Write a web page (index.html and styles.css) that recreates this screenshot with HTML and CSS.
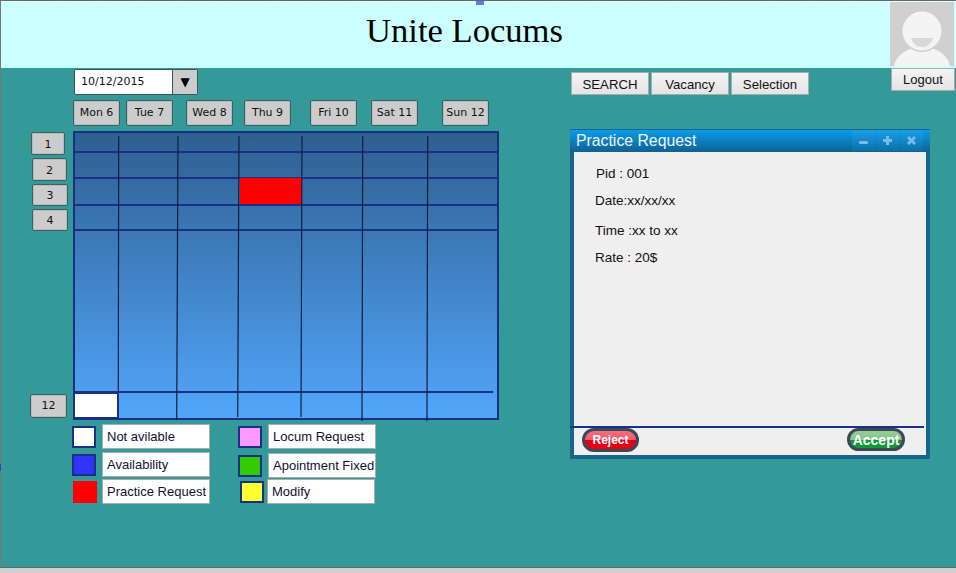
FILE: index.html
```html
<!DOCTYPE html>
<html lang="en">
<head>
    <meta charset="UTF-8">
    <title>Unite Locums</title>
    <link rel="stylesheet" href="styles.css">
</head>
<body>
    <div class="frame">
        <span class="handle handle-top"></span>
        <span class="handle handle-left"></span>

        <header class="header">
            <h1 class="title">Unite Locums</h1>
            <svg class="avatar" width="64" height="64" viewBox="0 0 64 64">
                <rect width="64" height="64" fill="#d0d0d0"/>
                <ellipse cx="32" cy="66" rx="28" ry="21" fill="#f4f4f4"/>
                <circle cx="32" cy="29" r="21" fill="#d0d0d0"/>
                <circle cx="32" cy="29" r="19.5" fill="#f4f4f4"/>
                <path d="M21 36 H43 Q40 45 32 45 Q24 45 21 36 Z" fill="#d8d8d8"/>
            </svg>
        </header>

        <main class="main">
            <section class="left">
                <div class="date-picker">
                    <span class="date-value">10/12/2015</span>
                    <span class="date-arrow">&#9660;</span>
                </div>

                <div class="days">
                    <span class="chip">Mon 6</span>
                    <span class="chip">Tue 7</span>
                    <span class="chip">Wed 8</span>
                    <span class="chip">Thu 9</span>
                    <span class="chip">Fri 10</span>
                    <span class="chip">Sat 11</span>
                    <span class="chip">Sun 12</span>
                </div>

                <div class="schedule">
                    <div class="hours">
                        <span class="chip hour">1</span>
                        <span class="chip hour">2</span>
                        <span class="chip hour">3</span>
                        <span class="chip hour">4</span>
                        <span class="chip hour hour-last">12</span>
                    </div>

                    <div class="calendar">
                        <div class="row row-1"></div>
                        <div class="row row-2"></div>
                        <div class="row row-3"><div class="cell-red"></div></div>
                        <div class="row row-4"></div>
                        <div class="row row-5"></div>
                        <div class="row-end"><div class="cell-white"></div></div>

                        <svg class="col-lines" width="422" height="285" viewBox="0 0 422 285">
                            <line x1="43.7" y1="3" x2="43.3" y2="259"/>
                            <line x1="103" y1="3" x2="101.7" y2="287"/>
                            <line x1="164" y1="3" x2="162.7" y2="284"/>
                            <line x1="227" y1="3" x2="226" y2="284"/>
                            <line x1="287.7" y1="3" x2="287" y2="288"/>
                            <line x1="352.7" y1="3" x2="352" y2="288"/>
                        </svg>
                    </div>
                </div>

                <div class="legend">
                    <div class="legend-col legend-col-a">
                        <div class="legend-item">
                            <span class="swatch swatch-white"></span>
                            <span class="legend-label">Not avilable</span>
                        </div>
                        <div class="legend-item">
                            <span class="swatch swatch-blue"></span>
                            <span class="legend-label">Availability</span>
                        </div>
                        <div class="legend-item">
                            <span class="swatch swatch-red"></span>
                            <span class="legend-label">Practice Request</span>
                        </div>
                    </div>
                    <div class="legend-col legend-col-b">
                        <div class="legend-item">
                            <span class="swatch swatch-pink"></span>
                            <span class="legend-label">Locum Request</span>
                        </div>
                        <div class="legend-item">
                            <span class="swatch swatch-green"></span>
                            <span class="legend-label">Apointment Fixed</span>
                        </div>
                        <div class="legend-item">
                            <span class="swatch swatch-yellow"></span>
                            <span class="legend-label">Modify</span>
                        </div>
                    </div>
                </div>
            </section>

            <section class="right">
                <div class="toolbar">
                    <nav class="tabs">
                        <a class="tab">SEARCH</a>
                        <a class="tab">Vacancy</a>
                        <a class="tab">Selection</a>
                    </nav>
                    <button type="button" class="logout">Logout</button>
                </div>

                <div class="panel">
                    <div class="panel-bar">
                        <span class="panel-title">Practice Request</span>
                        <span class="win-btn">
                            <svg width="11" height="11" viewBox="0 0 11 11"><rect x="1" y="6" width="9" height="3" rx="1"/></svg>
                        </span>
                        <span class="win-btn">
                            <svg width="11" height="11" viewBox="0 0 11 11"><path d="M4 1h3v3h3v3H7v3H4V7H1V4h3z"/></svg>
                        </span>
                        <span class="win-btn">
                            <svg width="11" height="11" viewBox="0 0 11 11"><path d="M1 3l2-2 2.500 2.500L8 1l2 2-2.500 2.500L10 8l-2 2-2.500-2.500L3 10 1 8l2.500-2.500z"/></svg>
                        </span>
                    </div>
                    <div class="panel-body">
                        <div class="details">
                            <p>Pid : 001</p>
                            <p>Date:xx/xx/xx</p>
                            <p>Time :xx to xx</p>
                            <p>Rate : 20$</p>
                        </div>
                        <div class="panel-foot">
                            <button type="button" class="pill pill-reject">Reject</button>
                            <button type="button" class="pill pill-accept">Accept</button>
                        </div>
                    </div>
                </div>
            </section>
        </main>
    </div>
</body>
</html>
```

FILE: styles.css
```css
* {
    box-sizing: border-box;
}

html,
body {
    height: 573px;
    margin: 0;
    overflow: hidden;
}

body {
    background: #cfcfcf;
    font-family: "Liberation Sans", Arial, sans-serif;
    color: #111133;
}

.frame {
    position: relative;
    height: 568px;
    background: #339999;
    border-top: 1px solid #666;
    border-left: 1px solid #777;
    border-bottom: 1px solid #666;
}

.handle {
    position: absolute;
    background: #7070f0;
}

.handle-top {
    top: 0;
    left: 475px;
    width: 8px;
    height: 4px;
}

.handle-left {
    top: 463px;
    left: -1px;
    width: 1px;
    height: 7px;
    background: #3344cc;
}

/* header */
.header {
    display: flex;
    align-items: flex-start;
    height: 67px;
    padding-left: 38px;
    background: #ccffff;
    border-top: 1px dashed #e8ffff;
}

.title {
    flex: 1;
    margin: 7px 0 0;
    font-family: "Liberation Serif", "Times New Roman", serif;
    font-size: 34.600px;
    font-weight: normal;
    line-height: 42px;
    text-align: center;
    color: #000;
}

.avatar {
    display: block;
    margin: 0 2px 0 0;
}

/* main area */
.main {
    display: flex;
    align-items: flex-start;
    padding-left: 29px;
}

.left {
    flex: none;
    width: 470px;
    padding-top: 1px;
}

.right {
    flex: none;
    width: 385px;
    margin-left: 70px;
}

.date-picker {
    display: flex;
    width: 124px;
    height: 26px;
    margin-left: 44px;
    background: #fff;
    border: 1px solid #3f5555;
    border-radius: 2px;
    font-family: "DejaVu Sans", sans-serif;
    font-size: 11px;
    line-height: 24px;
}

.date-value {
    flex: 1;
    padding-left: 6px;
    color: #111;
}

.date-arrow {
    width: 25px;
    background: #cccccc;
    border-left: 1px solid #3f5555;
    font-size: 12px;
    text-align: center;
    color: #000;
}

.chip {
    display: block;
    background: #cccccc;
    border: 1px solid #3f5f5f;
    border-radius: 2px;
    box-shadow: inset 0 0 0 1px #bbbbbb;
    font-family: "DejaVu Sans", sans-serif;
    font-size: 11px;
    text-align: center;
    color: #111;
}

.days {
    display: flex;
    margin: 5px 0 0 43px;
}

.days .chip {
    width: 47px;
    height: 26px;
    line-height: 24px;
}

.days .chip:nth-child(2) { margin-left: 6px; }
.days .chip:nth-child(3) { margin-left: 13px; }
.days .chip:nth-child(4) { margin-left: 11px; }
.days .chip:nth-child(5) { margin-left: 19px; }
.days .chip:nth-child(6) { margin-left: 14px; }
.days .chip:nth-child(7) { margin-left: 24px; }

.schedule {
    display: flex;
    margin-top: 5px;
}

.hours {
    display: flex;
    flex-direction: column;
    flex: none;
    width: 43px;
    padding-top: 1px;
}

.hour {
    height: 23px;
    line-height: 23px;
    width: 35px;
    margin: 0 0 3px 2px;
}

.hour:nth-child(1) {
    width: 34px;
    margin-left: 1px;
}

.hour:nth-child(3),
.hour:nth-child(4) {
    height: 22px;
    line-height: 21px;
    width: 36px;
}

.hour-last {
    width: 37px;
    height: 24px;
    line-height: 22px;
    margin: 160px 0 0;
}

.calendar {
    position: relative;
    display: flex;
    flex: none;
    flex-direction: column;
    width: 426px;
    height: 289px;
    border: 2px solid #1a3085;
    background: linear-gradient(#2f5f90, #52a6fa);
}

.row {
    display: flex;
    flex: none;
    border-bottom: 2px solid #1a3085;
}

.row-1 { height: 20px; }
.row-2 { height: 26px; }
.row-3 { height: 27px; }
.row-4 { height: 25px; }

.row-5 {
    height: 162px;
    margin-right: 4px;
}

.row-end {
    flex: 1;
}

.cell-red {
    width: 62px;
    margin: -1px 0 0 165px;
    background: #ff0000;
}

.cell-white {
    width: 46px;
    height: 27px;
    margin: -1px 0 0 -2px;
    background: #fff;
    border: 2px solid #1a3085;
}

.col-lines {
    position: absolute;
    top: 0;
    left: 0;
    overflow: visible;
}

.col-lines line {
    stroke: #0d1f40;
    stroke-width: 1.2;
}

/* legend */
.legend {
    display: flex;
    margin: 4px 0 0 42px;
}

.legend-col {
    display: flex;
    flex-direction: column;
}

.legend-col-a {
    width: 166px;
}

.legend-item {
    display: flex;
    align-items: center;
    height: 25px;
}

.legend-col-a .legend-item:nth-child(2) { margin-top: 3px; }
.legend-col-a .legend-item:nth-child(3) { margin-top: 2px; }
.legend-col-b .legend-item:nth-child(2) { margin-top: 4px; }
.legend-col-b .legend-item:nth-child(3) { margin-top: 1px; }

.swatch {
    width: 24px;
    height: 22px;
    margin-right: 6px;
    border: 2px solid #1a3085;
}

.swatch-white { background: #fff; }
.swatch-blue { background: #3333ff; }
.swatch-pink { background: #ff99ff; }
.swatch-green { background: #33cc00; }

.swatch-red {
    margin-left: 1px;
    margin-right: 5px;
    background: #ff0000;
    border-color: #ff0000;
}

.swatch-yellow {
    margin-left: 2px;
    margin-right: 3px;
    background: #ffff33;
}

.legend-label {
    width: 108px;
    height: 25px;
    padding-left: 4px;
    background: #fff;
    border: 1px solid #aaaaaa;
    font-size: 13px;
    line-height: 23px;
    white-space: nowrap;
    overflow: hidden;
}

/* right side */
.toolbar {
    display: flex;
    align-items: flex-start;
    justify-content: space-between;
}

.tabs {
    display: flex;
    gap: 2px;
    margin: 4px 0 0 1px;
}

.tab,
.logout {
    background: linear-gradient(#f4f4f4, #e4e4e4);
    border: 1px solid #aaaaaa;
    font-family: "Liberation Sans", Arial, sans-serif;
    font-size: 13.200px;
    text-align: center;
    color: #111;
}

.tab {
    width: 78px;
    height: 23px;
    line-height: 23px;
}

.logout {
    width: 64px;
    height: 23px;
    padding: 0;
    font-size: 13px;
    line-height: 21px;
}

.panel {
    display: flex;
    flex-direction: column;
    width: 360px;
    height: 330px;
    margin-top: 34px;
    padding-top: 1px;
    background: #17648f;
}

.panel-bar {
    display: flex;
    height: 22px;
    padding: 0 7px 1px 6px;
    background: linear-gradient(#0a9cec, #11618f);
}

.panel-title {
    flex: 1;
    font-size: 15.800px;
    line-height: 22px;
    color: #eef6fb;
}

.win-btn {
    display: flex;
    align-items: center;
    justify-content: center;
    width: 23px;
    margin-left: 1px;
    background: linear-gradient(#1a9fe8, #0d6fa8);
}

.win-btn svg {
    fill: #74bde6;
}

.panel-body {
    display: flex;
    flex: 1;
    flex-direction: column;
    margin: 0 4px 4px;
    background: #efefef;
}

.details {
    flex: 1;
    padding: 14px 0 0 21px;
}

.details p {
    margin: 0;
    font-size: 13.500px;
    line-height: 16px;
    color: #111;
}

.details p:nth-child(1) {
    margin-left: 1px;
}

.details p:nth-child(2) { margin-top: 11px; }
.details p:nth-child(3) { margin-top: 14px; }
.details p:nth-child(4) { margin-top: 11px; }

.panel-foot {
    display: flex;
    align-items: flex-start;
    justify-content: space-between;
    height: 29px;
    margin: 0 2px 0 -4px;
    padding: 0 19px 0 12px;
    border-top: 2px solid #1a3085;
}

.pill {
    height: 24px;
    padding: 0;
    border: 3px solid #3c4855;
    border-radius: 12px;
    font-family: "Liberation Sans", Arial, sans-serif;
    font-weight: bold;
    line-height: 16px;
    color: #fff;
}

.pill-reject {
    width: 57px;
    font-size: 12px;
    background: linear-gradient(#f27080 0, #ee5a6c 50%, #e60012 52%, #e60012 100%);
}

.pill-accept {
    width: 58px;
    height: 23px;
    font-size: 14px;
    background: linear-gradient(#96cc96 0, #86c48a 50%, #0f9a3a 52%, #0f9a3a 100%);
}
```
